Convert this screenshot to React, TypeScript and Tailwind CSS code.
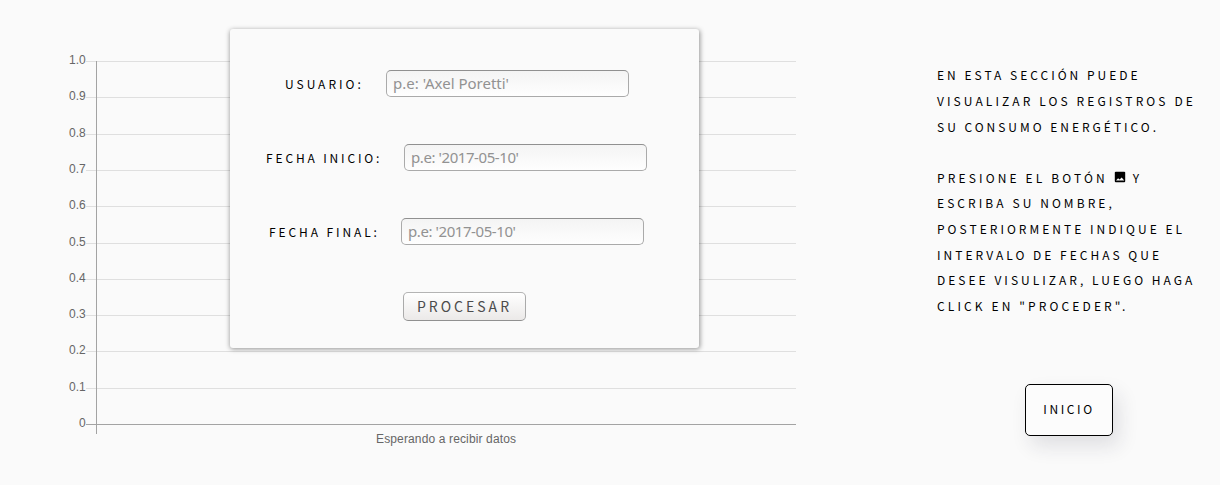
const ticks = [
  { label: '1.0', y: 61 },
  { label: '0.9', y: 97 },
  { label: '0.8', y: 134 },
  { label: '0.7', y: 170 },
  { label: '0.6', y: 206 },
  { label: '0.5', y: 243 },
  { label: '0.4', y: 279 },
  { label: '0.3', y: 315 },
  { label: '0.2', y: 351 },
  { label: '0.1', y: 388 },
];

function Chart() {
  return (
    <svg className="block h-[485px] w-[820px] shrink-0" viewBox="0 0 820 485" fontFamily="'Liberation Sans', sans-serif" fontSize="12" fill="#666">
      {ticks.map((t) => (
        <g key={t.label}>
          <rect x="86" y={t.y} width="710" height="1" fill="#dfdfdf" />
          <text x="85.7" y={t.y + 3} textAnchor="end">{t.label}</text>
        </g>
      ))}
      <rect x="86" y="424" width="710" height="1" fill="#a3a3a3" />
      <rect x="96" y="61" width="1" height="373" fill="#a3a3a3" />
      <text x="85.7" y="427" textAnchor="end">0</text>
      <text x="446" y="443" textAnchor="middle" textLength="140">Esperando a recibir datos</text>
    </svg>
  );
}

type FieldProps = { label: string; placeholder: string; row: string; text: string; input: string };

function Field({ label, placeholder, row, text, input }: FieldProps) {
  return (
    <label className={`flex h-[27px] items-center ${row}`}>
      <span className={`shrink-0 whitespace-nowrap text-[12px] leading-[27px] ${text}`}>{label}</span>
      <input
        className={`h-[27px] w-[243px] rounded-[5px] border border-[#aaa] border-t-[#909090] bg-linear-to-b from-[#f4f4f4] to-[#fefefe] px-[6px] pb-[2px] font-['Noto_Sans',sans-serif] text-[15px] outline-none placeholder:text-[#929292] ${input}`}
        placeholder={placeholder}
      />
    </label>
  );
}

function PictureIcon() {
  return (
    <svg className="mr-[7px] inline-block size-[12px] align-[0px]" viewBox="0 0 12 12">
      <rect x="0.8" y="0.8" width="10.4" height="10.4" rx="1" fill="#000" />
      <path d="M2 9.6 4.1 7.2 5.6 8.6 7.7 6.4 10.2 9.6Z" fill="#fafafa" />
    </svg>
  );
}

export default function App() {
  return (
    <div className="h-[487px] w-[1220px] bg-white">
      <main className="relative flex h-[485px] w-[1220px] overflow-hidden bg-[#fafafa] font-['Noto_Sans_CJK_SC',sans-serif] text-black">
        <Chart />
        <form className="absolute top-[29px] left-[230px] flex h-[319px] w-[469px] flex-col rounded-[3px] bg-[#fafafa] pt-[41px] shadow-[0.5px_1px_5px_rgba(0,0,0,0.42)]">
          <Field label="USUARIO:" placeholder="p.e: 'Axel Poretti'" row="pl-[55px]" text="w-[101px] tracking-[3px]" input="tracking-normal" />
          <Field label="FECHA INICIO:" placeholder="p.e: '2017-05-10'" row="mt-[47px] pl-[36px]" text="w-[138px] tracking-[2.85px]" input="tracking-[-0.42px]" />
          <Field label="FECHA FINAL:" placeholder="p.e: '2017-05-10'" row="mt-[47px] pl-[39px]" text="w-[132px] tracking-[2.9px]" input="tracking-[-0.42px]" />
          <button type="button" className="mt-[47px] ml-[173px] h-[29px] w-[123px] rounded-[5px] border border-x-[#aaa] border-t-[#b4b4b4] border-b-[#909090] bg-linear-to-b from-white to-[#ebe9e8] text-[14px] leading-[27px] tracking-[3px] text-[#4c4c4c]">
            PROCESAR
          </button>
        </form>
        <aside className="flex flex-1 flex-col pt-[62.3px] pl-[117px] text-[12px] leading-[25.67px] whitespace-nowrap">
          <p>
            <span className="tracking-[3px]">EN ESTA SECCIÓN PUEDE</span><br />
            <span className="tracking-[3.1px]">VISUALIZAR LOS REGISTROS DE</span><br />
            <span className="tracking-[2.98px]">SU CONSUMO ENERGÉTICO.</span>
          </p>
          <p className="mt-[25.4px]">
            <span className="tracking-[3.14px]">PRESIONE EL BOTÓN <PictureIcon />Y</span><br />
            <span className="tracking-[3.07px]">ESCRIBA SU NOMBRE,</span><br />
            <span className="tracking-[3.02px]">POSTERIORMENTE INDIQUE EL</span><br />
            <span className="tracking-[3.01px]">INTERVALO DE FECHAS QUE</span><br />
            <span className="tracking-[3.02px]">DESEE VISULIZAR, LUEGO HAGA</span><br />
            <span className="tracking-[3.12px]">CLICK EN "PROCEDER".</span>
          </p>
          <button type="button" className="mt-[65.3px] ml-[88px] h-[52px] w-[88px] rounded-[5px] border border-black bg-[#fcfcfc] pb-[2px] tracking-[2.6px] shadow-[6px_10px_20px_rgba(30,30,60,0.12)]">
            INICIO
          </button>
        </aside>
      </main>
    </div>
  );
}
